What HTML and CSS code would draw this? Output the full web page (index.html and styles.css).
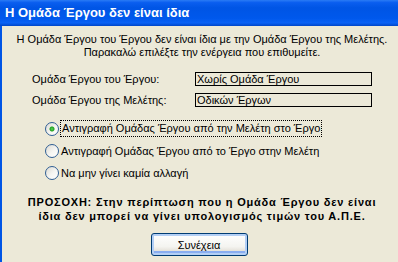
FILE: index.html
```html
<!DOCTYPE html>
<html>
  <head>
    <meta charset="UTF-8" />
    <title>Η Ομάδα Έργου δεν είναι ίδια</title>
    <link rel="stylesheet" href="styles.css">
  </head>
  <body>
    <div class="window">
      <div class="titlebar">Η Ομάδα Έργου δεν είναι ίδια</div>
      <div class="client">
        <p class="intro">
          Η Ομάδα Έργου του Έργου δεν είναι ίδια με την Ομάδα Έργου της Μελέτης.<br />
          Παρακαλώ επιλέξτε την ενέργεια που επιθυμείτε.
        </p>
        <div class="fields">
          <div class="field">
            <span class="field-label">Ομάδα Έργου του Έργου:</span>
            <span class="field-box">Χωρίς Ομάδα Έργου</span>
          </div>
          <div class="field">
            <span class="field-label">Ομάδα Έργου της Μελέτης:</span>
            <span class="field-box">Οδικών Έργων</span>
          </div>
        </div>
        <div class="options">
          <label class="option">
            <input type="radio" name="act" checked />
            <span class="focus">Αντιγραφή Ομάδας Έργου από την Μελέτη στο Έργο</span>
          </label>
          <label class="option">
            <input type="radio" name="act" />
            <span>Αντιγραφή Ομάδας Έργου από το Έργο στην Μελέτη</span>
          </label>
          <label class="option">
            <input type="radio" name="act" />
            <span>Να μην γίνει καμία αλλαγή</span>
          </label>
        </div>
        <p class="warning">
          ΠΡΟΣΟΧΗ: Στην περίπτωση που η Ομάδα Έργου δεν είναι<br />
          ίδια δεν μπορεί να γίνει υπολογισμός τιμών του Α.Π.Ε.
        </p>
        <div class="actions">
          <button class="btn">Συνέχεια</button>
        </div>
      </div>
    </div>
  </body>
</html>
```

FILE: styles.css
```css
* {
  --face: #ece9d8;
  --blue: #0055e5;
  box-sizing: border-box;
}
body {
  margin: 0;
  padding: 0;
  font-family: "Liberation Sans", Arial, sans-serif;
  font-size: 11px;
  color: #000;
  background: var(--face);
}
.window {
  width: 398px;
  height: 262px;
  overflow: hidden;
}
.titlebar {
  height: 26px;
  padding: 5px 0 0 5px;
  color: #fff;
  font-family: "Liberation Sans", Arial, sans-serif;
  font-weight: bold;
  font-size: 13px;
  background: linear-gradient(
    #2a7bf5 0,
    #0a5eef 10%,
    #0055e5 30%,
    #0058ec 70%,
    #0a62f5 88%,
    #0046c8 100%
  );
}
.client {
  height: 236px;
  border-left: 2px solid var(--blue);
  padding: 7px 0 0 4px;
}
.intro {
  margin: 0;
  text-align: center;
  line-height: 13px;
}
.fields {
  margin: 13px 0 0 26px;
}
.field {
  display: flex;
  align-items: center;
  height: 14px;
  margin-bottom: 7px;
}
.field-label {
  width: 163px;
}
.field-box {
  width: 177px;
  height: 14px;
  border: 1px solid #000;
  line-height: 12px;
  padding-left: 1px;
}
.options {
  margin: 13px 0 0 39px;
}
.option {
  display: flex;
  align-items: center;
  height: 17px;
  margin-bottom: 5px;
}
.option input {
  appearance: none;
  width: 14px;
  height: 14px;
  margin: 0 2px 0 0;
  border: 1px solid #2f5e94;
  border-radius: 50%;
  background: linear-gradient(135deg, #dcdad2 0, #f6f6f3 55%, #fff 100%);
}
.option input:checked {
  background: radial-gradient(circle, #5ed35e 0, #21a121 2px, transparent 3px),
    linear-gradient(135deg, #dcdad2 0, #f6f6f3 55%, #fff 100%);
}
.focus {
  outline: 1px dotted #000;
  padding: 1px 1px 2px 1px;
}
.warning {
  margin: 14px 0 0 0;
  text-align: center;
  font-weight: bold;
  line-height: 14px;
  letter-spacing: 0.8px;
}
.actions {
  display: flex;
  justify-content: center;
  margin-top: 10px;
  padding-right: 6px;
}
.btn {
  width: 97px;
  height: 23px;
  font-family: "Liberation Sans", Arial, sans-serif;
  font-size: 11px;
  color: #000;
  border: 1px solid #003c74;
  border-radius: 3px;
  background: linear-gradient(#fff 0, #f4f4f0 60%, #d6d0c5 100%);
  box-shadow: inset 0 0 0 2px #b3cff5, inset 0 -2px 0 2px #89adf0;
}
```
